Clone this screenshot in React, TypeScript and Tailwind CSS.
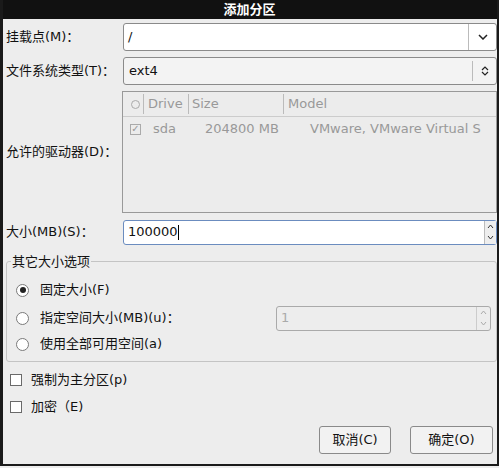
import React from "react";

const F = { fontFamily: '"DejaVu Sans","Noto Sans CJK SC",sans-serif' };

function Radio({ on }: { on?: boolean }) {
  return (
    <span className="w-[13px] h-[13px] rounded-full border border-[#7a7a7a] bg-white flex items-center justify-center">
      {on && <span className="w-[6px] h-[6px] rounded-full bg-[#222]" />}
    </span>
  );
}
function Check() {
  return <span className="w-[12px] h-[12px] border border-[#6a6a6a] bg-white" />;
}

export default function App() {
  return (
    <div style={F} className="w-[499px] h-[468px] bg-[#ededed] text-[13px] text-[#111] relative overflow-hidden">
      <div className="h-[19px] bg-[#111] text-white font-bold flex items-center justify-center">添加分区</div>
      <div className="absolute left-0 top-0 w-[3px] h-[466px] bg-[#1a1a1a]" />
      <div className="absolute right-0 top-0 w-[2px] h-[466px] bg-[#1a1a1a]" />
      <div className="absolute left-0 top-[464px] w-[499px] h-[2px] bg-[#1a1a1a]" />
      <div className="pl-[6px] pr-[2px]">
        <div className="flex items-center h-[29px] mt-[3px]">
          <span className="w-[117px]">挂载点(M)：</span>
          <div className="flex-1 h-[28px] bg-white border border-[#8a8a8a] rounded-[3px] flex items-center">
            <span className="flex-1 pl-[4px]">/</span>
            <span className="w-[28px] h-full border-l border-[#bbb] flex items-center justify-center">
              <svg width="10" height="6" viewBox="0 0 10 6"><path d="M1 1l4 4 4-4" fill="none" stroke="#222" strokeWidth="1.5" /></svg>
            </span>
          </div>
        </div>
        <div className="flex items-center h-[29px] mt-[5px]">
          <span className="w-[117px]">文件系统类型(T)：</span>
          <div className="flex-1 h-[28px] bg-[#f3f3f3] border border-[#8a8a8a] rounded-[3px] flex items-center">
            <span className="flex-1 pl-[5px]">ext4</span>
            <span className="w-[24px] h-[20px] border-l border-[#bbb] flex items-center justify-center">
              <svg width="8" height="12" viewBox="0 0 8 12"><path d="M1 5l3-3 3 3M1 7l3 3 3-3" fill="none" stroke="#222" strokeWidth="1.2" /></svg>
            </span>
          </div>
        </div>
        <div className="flex items-center mt-[6px]">
          <span className="w-[116px]">允许的驱动器(D)：</span>
          <div className="flex-1 h-[122px] border border-[#999] bg-[#ececec] text-[#999]">
            <div className="h-[25px] border-b border-[#ccc] flex items-center">
              <span className="w-[9px] h-[9px] rounded-full border border-[#aaa] ml-[8px] mr-[3px]" />
              <span className="border-l border-[#bbb] pl-[4px] w-[45px]">Drive</span>
              <span className="border-l border-[#bbb] pl-[3px] w-[95px]">Size</span>
              <span className="border-l border-[#bbb] pl-[4px]">Model</span>
            </div>
            <div className="h-[24px] flex items-center">
              <span className="w-[11px] h-[11px] border border-[#aaa] ml-[7px] flex items-center justify-center text-[10px] leading-none">✓</span>
              <span className="ml-[12px] w-[52px]">sda</span>
              <span className="w-[105px]">204800 MB</span>
              <span className="whitespace-nowrap">VMware, VMware Virtual S</span>
            </div>
          </div>
        </div>
        <div className="flex items-center h-[26px] mt-[6px]">
          <span className="w-[117px]">大小(MB)(S)：</span>
          <div className="flex-1 h-[25px] bg-white border border-[#6b8cbf] rounded-[3px] flex items-center">
            <span className="flex-1 pl-[4px]">100000<span className="inline-block w-px h-[15px] bg-black align-middle" /></span>
            <span className="w-[12px] h-full border-l border-[#bbb] flex flex-col items-center justify-around bg-[#eee]">
              <svg width="7" height="5" viewBox="0 0 7 5"><path d="M1 4l2.5-3 2.5 3" fill="none" stroke="#333" /></svg>
              <svg width="7" height="5" viewBox="0 0 7 5"><path d="M1 1l2.5 3 2.5-3" fill="none" stroke="#333" /></svg>
            </span>
          </div>
        </div>
        <div className="relative mt-[16px] h-[101px] border border-[#c4c4c4] rounded-[3px]">
          <span className="absolute -top-[10px] left-[4px] bg-[#ededed] px-[1px]">其它大小选项</span>
          <div className="flex items-center h-[20px] mt-[18px] pl-[9px] gap-[11px]"><Radio on />固定大小(F)</div>
          <div className="flex items-center h-[26px] mt-[5px] pl-[9px] gap-[11px]">
            <Radio />
            <span className="flex-1">指定空间大小(MB)(u)：</span>
            <div className="w-[215px] h-[25px] mr-[5px] border border-[#aaa] rounded-[3px] flex items-center text-[#aaa]">
              <span className="flex-1 pl-[4px]">1</span>
              <span className="w-[14px] h-full border-l border-[#ccc] flex flex-col items-center justify-around">
                <svg width="7" height="5" viewBox="0 0 7 5"><path d="M1 4l2.5-3 2.5 3" fill="none" stroke="#aaa" /></svg>
                <svg width="7" height="5" viewBox="0 0 7 5"><path d="M1 1l2.5 3 2.5-3" fill="none" stroke="#aaa" /></svg>
              </span>
            </div>
          </div>
          <div className="flex items-center h-[20px] mt-[3px] pl-[9px] gap-[11px]"><Radio />使用全部可用空间(a)</div>
        </div>
        <div className="flex items-center gap-[9px] h-[20px] mt-[8px] pl-[4px]"><Check />强制为主分区(p)</div>
        <div className="flex items-center gap-[9px] h-[20px] mt-[7px] pl-[4px]"><Check />加密（E)</div>
        <div className="flex justify-end gap-[19px] mt-[9px] pr-[4px]">
          <button className="w-[72px] h-[28px] border border-[#8a8a8a] rounded-[3px] bg-[#f2f2f2]">取消(C)</button>
          <button className="w-[83px] h-[28px] border border-[#8a8a8a] rounded-[3px] bg-[#f2f2f2]">确定(O)</button>
        </div>
      </div>
    </div>
  );
}
